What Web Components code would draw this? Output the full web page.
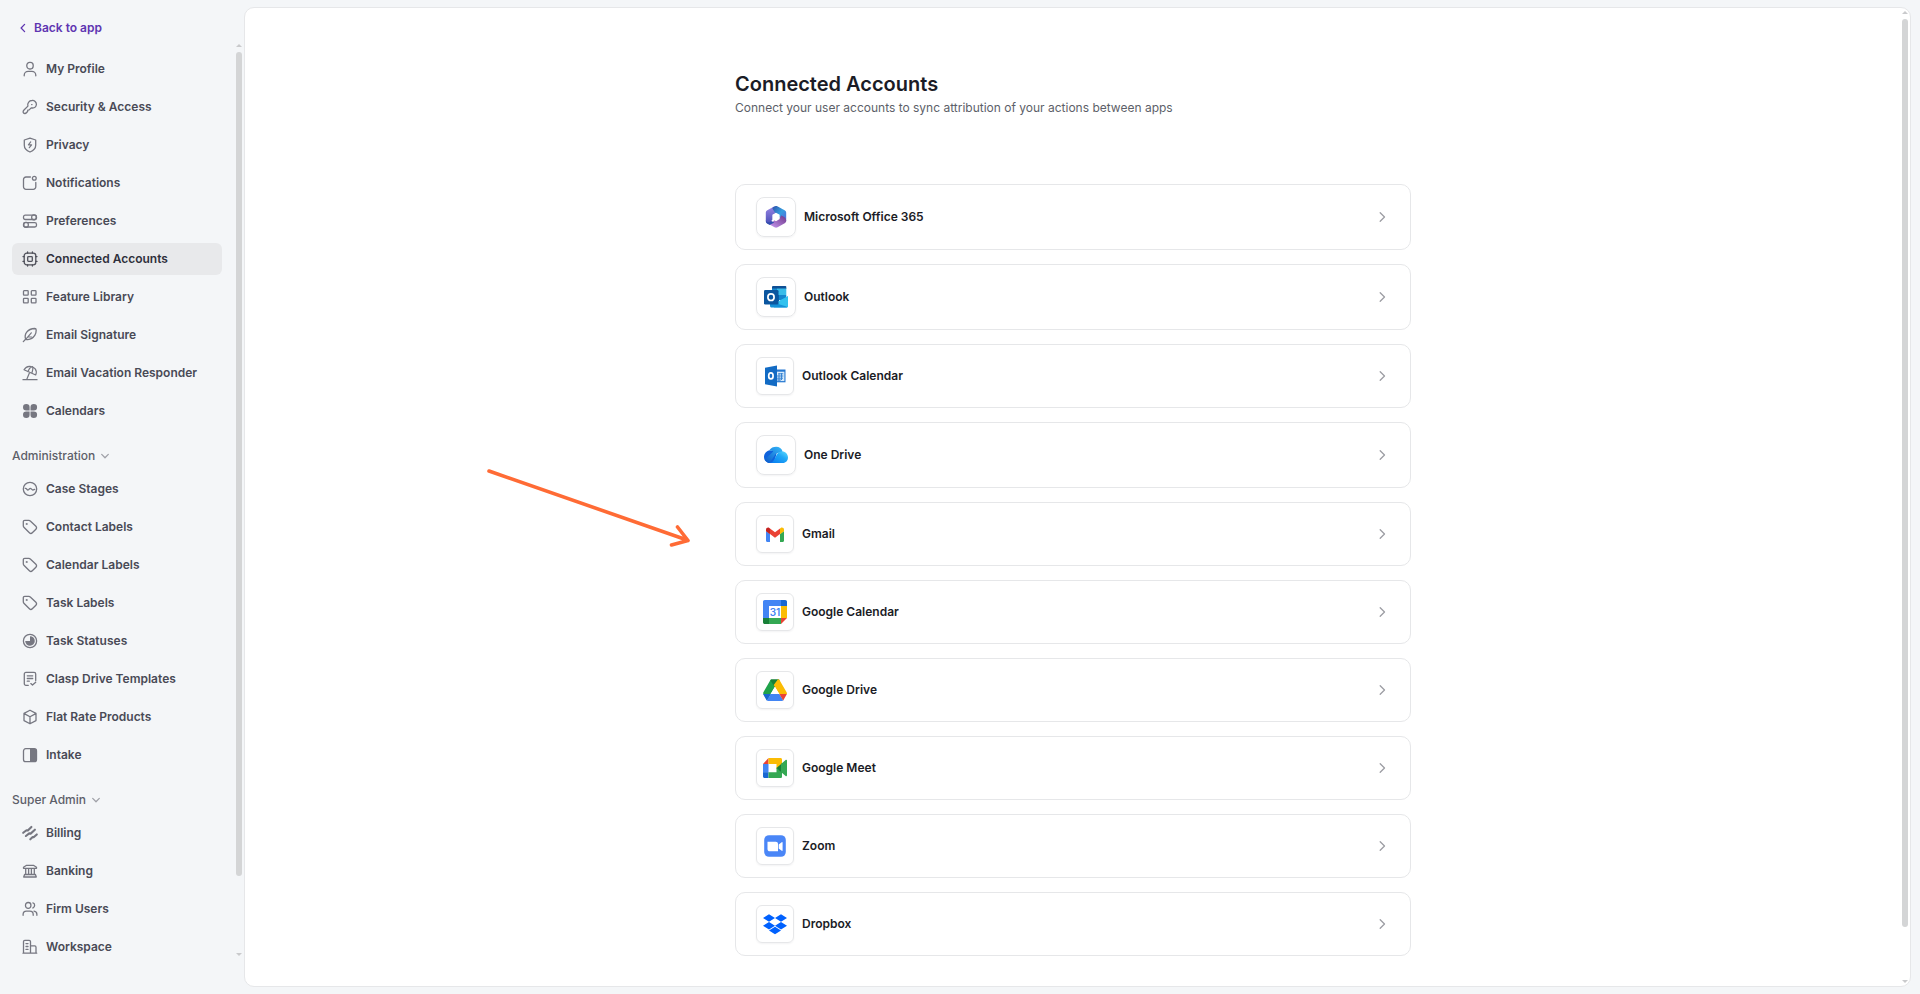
<!DOCTYPE html>
<html lang="en">
<head>
<meta charset="utf-8">
<meta name="viewport" content="width=device-width, initial-scale=1">
<title>Connected Accounts</title>
<style>
  :root {
    --bg: #f4f6f8;
    --line: #e6e7e9;
    --text: #1b1c26;
    --text-nav: #494a56;
    --text-muted: #5d5f69;
    --icon: #767781;
    --accent: #5e35b1;
  }
  body {
    margin: 0;
    background: var(--bg);
    color: var(--text);
    font-family: Inter, "Liberation Sans", sans-serif;
    font-size: 12px;
    line-height: 20px;
  }
</style>
</head>
<body>
<settings-app>
  <settings-sidebar slot="sidebar">
    <nav-item icon="user">My Profile</nav-item>
    <nav-item icon="key">Security &amp; Access</nav-item>
    <nav-item icon="shield">Privacy</nav-item>
    <nav-item icon="notification">Notifications</nav-item>
    <nav-item icon="sliders">Preferences</nav-item>
    <nav-item icon="chip" active>Connected Accounts</nav-item>
    <nav-item icon="grid">Feature Library</nav-item>
    <nav-item icon="feather">Email Signature</nav-item>
    <nav-item icon="umbrella">Email Vacation Responder</nav-item>
    <nav-item icon="clover">Calendars</nav-item>
    <nav-group label="Administration">
      <nav-item icon="stages">Case Stages</nav-item>
      <nav-item icon="tag">Contact Labels</nav-item>
      <nav-item icon="tag">Calendar Labels</nav-item>
      <nav-item icon="tag">Task Labels</nav-item>
      <nav-item icon="status">Task Statuses</nav-item>
      <nav-item icon="template">Clasp Drive Templates</nav-item>
      <nav-item icon="box">Flat Rate Products</nav-item>
      <nav-item icon="intake">Intake</nav-item>
    </nav-group>
    <nav-group label="Super Admin">
      <nav-item icon="billing">Billing</nav-item>
      <nav-item icon="bank">Banking</nav-item>
      <nav-item icon="users">Firm Users</nav-item>
      <nav-item icon="building">Workspace</nav-item>
    </nav-group>
  </settings-sidebar>

  <page-header>
    Connected Accounts
    <span slot="description">Connect your user accounts to sync attribution of your actions between apps</span>
  </page-header>
  <account-card logo="office" large>Microsoft Office 365</account-card>
  <account-card logo="outlook" large>Outlook</account-card>
  <account-card logo="outlookCalendar">Outlook Calendar</account-card>
  <account-card logo="onedrive" large>One Drive</account-card>
  <account-card logo="gmail">Gmail</account-card>
  <account-card logo="gcal">Google Calendar</account-card>
  <account-card logo="gdrive">Google Drive</account-card>
  <account-card logo="meet">Google Meet</account-card>
  <account-card logo="zoom">Zoom</account-card>
  <account-card logo="dropbox">Dropbox</account-card>
  <pointer-arrow slot="annotation"></pointer-arrow>
</settings-app>

<script>
// 16x16 line icons, drawn with currentColor
const ICONS = {
  user: '<rect x="4.8" y="1.4" width="6.4" height="6.6" rx="2.9"/><path d="M2.2 14.8v-.6a3.9 3.9 0 0 1 3.9-3.8h3.8a3.9 3.9 0 0 1 3.9 3.8v.6"/>',
  key: '<path d="M10 1.5a4.3 4.3 0 0 0-4.1 5.6L2 11c-1.2 1.2-1 2.5-.4 3 .6.7 2 .7 2.8-.2l1.2-1.3.2-1.4 1.4-.2 2-2a4.2 4.2 0 0 0 1.100.1A4 4 0 0 0 14.4 5.5 3.9 3.9 0 0 0 10 1.5z"/><path d="M9.6 5.6h.4"/>',
  shield: '<path d="M8 1.2 13.7 3v5.2c0 3.2-2.3 5.4-5.7 6.8-3.4-1.4-5.7-3.6-5.7-6.8V3z"/><path d="m8.7 4.9-2.3 2.900h3.2l-2.3 2.9" stroke-width="1.2"/>',
  notification: '<path d="M8.4 2H4a2.5 2.5 0 0 0-2.5 2.5v7.3A2.5 2.5 0 0 0 4 14.3h7.3a2.5 2.5 0 0 0 2.5-2.5V7.5"/><circle cx="12.3" cy="3.3" r="1.9"/>',
  sliders: '<rect x="1.5" y="2.2" width="13" height="4.3" rx="1.7"/><rect x="1.5" y="9.7" width="13" height="4.3" rx="1.7"/><rect x="9.7" y="1.9" width="4.5" height="4.9" rx="2"/><rect x="1.8" y="9.4" width="4.5" height="4.9" rx="2"/>',
  chip: '<rect x="2.2" y="2.2" width="11.6" height="11.6" rx="2.6"/><rect x="5.7" y="5.7" width="4.6" height="4.6" rx=".8"/><path d="M5.6 1v1.2M10.4 1v1.2M5.6 13.8V15M10.4 13.8V15M1 5.6h1.2M1 10.4h1.2M13.8 5.6H15M13.8 10.4H15"/>',
  grid: '<rect x="1.5" y="1.7" width="4.7" height="4.5" rx=".7"/><rect x="9.3" y="1.7" width="4.7" height="4.5" rx=".7"/><rect x="1.5" y="9.4" width="4.7" height="4.5" rx=".7"/><rect x="9.3" y="9.4" width="4.7" height="4.5" rx=".7"/>',
  feather: '<path d="m1.3 14.6 2.3-2.3"/><path d="M3.7 12.3C1.8 7.5 5.300 1.700 12.7 1.500c1 0 1.500.5 1.500 1.500 0 1.800-.2 3.500-1.300 5.200-1.900 3-5.200 5-9.200 4.100z"/><path d="m3.700 12.300 5.600-6.500M5.800 10h3.800" stroke-width="1.2"/>',
  umbrella: '<path d="M1 14.7h14"/><path d="M2 4.7C4.5.7 10 .2 13 3.700c1.600 2 1.600 4.300.7 6.300zM6 6.600c1-2.800 2.500-4.700 4.500-5M9.800 8.200c1-2.800 1.500-5 .7-6.600M7.700 7.200 4.700 14.500" stroke-width="1.2"/>',
  clover: '<path fill="currentColor" stroke="none" d="M7.600 7.600H4.300a3.300 3.300 0 1 1 3.300-3.300zM8.500 7.600V4.300a3.300 3.300 0 1 1 3.300 3.300zM7.600 8.500v3.300a3.300 3.300 0 1 1-3.300-3.300zM8.500 8.500h3.300a3.300 3.300 0 1 1-3.300 3.300z"/>',
  stages: '<circle cx="8" cy="8" r="6.7"/><path d="M3.2 7.300h.5c.9 0 1.200 1.700 2.300 1.700s1.200-1.700 2.300-1.700 1.400 1.700 2.500 1.700 1.200-.6 1.900-.6"/>',
  tag: '<path d="M1.3 2.800v4c0 .5.2 1 .6 1.400l5.500 5.500c1 1 2 1 2.900.1l3.600-3.600c.9-.9.900-2 0-2.900L8.300 2C7.900 1.500 7.400 1.300 6.900 1.300H2.800c-1 0-1.500.5-1.500 1.500z"/><circle cx="4.7" cy="5" r=".4"/>',
  status: '<circle cx="8" cy="8" r="6.600"/><path fill="currentColor" stroke="none" d="M8 3.200a4.800 4.800 0 1 1-4.800 4.900H8z"/>',
  template: '<path d="M6.300 14.300H3.900a1.600 1.600 0 0 1-1.600-1.600V3a1.600 1.600 0 0 1 1.600-1.600h8.200A1.600 1.600 0 0 1 13.700 3v6.500M5.300 4.800h5.400M5.300 7.500h5.400M5.300 10.200h2M8.800 12.600l1.700 1.500 3.200-2.800"/>',
  box: '<path d="m8 1.200 6 3.200v7.200l-6 3.200-6-3.200V4.400zM2.200 4.600 8 7.800l5.800-3.200M8 7.800v6.800"/>',
  intake: '<rect x="1.5" y="1.7" width="13" height="13" rx="2.2"/><path fill="currentColor" stroke="none" d="M8 1.7h4.500a2 2 0 0 1 2 2v9a2 2 0 0 1-2 2H8z"/>',
  billing: '<path stroke-width="2.1" d="M1.200 7.800 4.500 5.200l1.300.3 3.600-3.600M3.900 11 7.200 8.400l1.400.2L12.900 4.700M8.300 14.300l2.400-2.300 1.200.1 2.900-2.700"/>',
  bank: '<path d="M1.500 5.300V4.200L4.600 2.300h6.800l3.100 1.900v1.100zM3.700 5.600v5.900M6.600 5.600v5.900M9.400 5.600v5.900M12.300 5.600v5.900M2.600 11.500h10.800l.9 2.500H1.700z"/>',
  users: '<rect x="3.5" y="1.5" width="5.4" height="5.800" rx="2.6"/><path d="M1.100 14.300v-.9c0-1.900 1.400-3.300 3.300-3.300h3.500c1.900 0 3.300 1.400 3.300 3.300v.9M10.900 1.800c2.300.5 2.300 4.600 0 5.200M12 10.200c1.700.2 2.900 1.500 2.900 3.200v.9"/>',
  building: '<path d="M1.500 14.200V2.700a1.300 1.300 0 0 1 1.300-1.300h4.400a1.300 1.300 0 0 1 1.300 1.300v11.500M8.500 6.900h4.200A1.300 1.300 0 0 1 14 8.200v6M1 14.200h13.700M4 4.600h2M4 7.500h2M4 10.400h2"/>',
  left: '<path d="M9.600 4.400 6.100 8l3.500 3.600"/>',
  right: '<path d="m6.200 3.700 4.300 4.300-4.300 4.300"/>',
  down: '<path d="M4.700 6.400 8 9.700l3.300-3.300"/>'
};

// 24x24 product marks
const LOGOS = {
  office: `
    <defs>
      <linearGradient id="o1" x1="0" y1="0" x2="0" y2="1"><stop stop-color="#9a86e4"/><stop offset="1" stop-color="#4a50b8"/></linearGradient>
      <linearGradient id="o2" x1="0" y1="0" x2="1" y2="1"><stop stop-color="#2d50a8"/><stop offset=".5" stop-color="#369ee0"/><stop offset="1" stop-color="#5860d8"/></linearGradient>
      <linearGradient id="o3" x1="0" y1="1" x2="1" y2="0"><stop stop-color="#c99af0"/><stop offset="1" stop-color="#6c3489"/></linearGradient>
    </defs>
    <path fill="url(#o1)" d="M10.500 1.300 3.300 5.200C2.300 5.800 1.800 6.700 1.800 7.800v8.100c0 1.200.7 2 1.500 2.400 1.700.9 3.900.1 3.900-2l2-3L12.500 5z"/>
    <path fill="url(#o2)" d="M9 2.200 11 1.200c.8-.4 1.500-.4 2.300 0l7.300 4c1 .6 1.600 1.500 1.600 2.600v8c0 .5-.2 1-.6 1.300-1.500 0-4.600-.8-4.600-2.800L12 9 8.800 4.300C8.300 3.600 8.300 2.800 9 2.200z"/>
    <path fill="url(#o3)" d="M22.200 15.500c0 1.200-.5 2.200-1.500 2.800l-7.100 4c-1.100.6-2 .6-3.100 0l-5-2.800L12 14c1.700-.9 4.900-.8 5-3.600 2.400.6 5.200 2.600 5.200 5.100z"/>
    <path fill="#344eaf" d="M1.800 15.200c.3 2.300 4 3 5.400.8l3.100 1.600-4.600 2.500-2.300-1.400c-1-.6-1.600-1.700-1.600-3.500z"/>
    <path fill="#fff" stroke="#fff" stroke-width="1.500" stroke-linejoin="round" d="m12 8.600 2.900 1.600v3.500L12 15.400l-2.900-1.700v-3.500z"/>`,
  outlook: `
    <path fill="#0f4f94" d="M9 1h12.500c.5 0 .8.300.8.800V4H8V2a1 1 0 0 1 1-1z"/>
    <path fill="#168bd1" d="M8 3.500h5V10H8z"/><path fill="#39bce9" d="M13 3.500h9.300V10H13z"/>
    <path fill="#0b64ad" d="M8 10h7v6H8z"/><path fill="#1485cd" d="M15 10h7.300v5H15z"/>
    <path fill="#35b8ed" d="m24 11-15 8.500 1 3h12.500c.9 0 1.500-.6 1.500-1.500z"/>
    <path fill="#1591d8" d="M6 12v9c0 .9.700 1.500 1.500 1.500h15c.5 0 .9-.2 1.200-.5z"/>
    <path fill="#31c1ee" d="m11 18 13 4V11.500z"/>
    <rect y="5" width="14.500" height="14.500" rx="1.300" fill="#0b569f"/><ellipse cx="7" cy="12.200" rx="3.100" ry="3.300" fill="none" stroke="#fff" stroke-width="1.700"/>`,
  outlookCalendar: `
    <path fill="#2477d0" d="M13 5.500h9.500v12.800H13z"/><path fill="#d8ebfb" d="M13 7.700h8.400v9.400H13z"/>
    <path stroke="#3884d2" stroke-width="1" d="M15.500 9.800h4.800M14 12h6.300M14 14.200h6M14 16h4M16 9v8M18.500 9v7"/>
    <path fill="#126bc4" d="M2 3.800 14 1.500v21L2 20.200z"/><ellipse cx="7.900" cy="11.900" rx="2.200" ry="3" fill="none" stroke="#fff" stroke-width="1.700"/>`,
  onedrive: `
    <defs>
      <linearGradient id="d1" x1="0" y1="1" x2="1" y2="0"><stop stop-color="#0c58c9"/><stop offset="1" stop-color="#35bbfb"/></linearGradient>
      <linearGradient id="d2" x1="1" y1="0" x2="0" y2="1"><stop stop-color="#5fdcff"/><stop offset=".4" stop-color="#1fa7f6"/><stop offset="1" stop-color="#087aef"/></linearGradient>
    </defs>
    <path fill="#0f63dc" d="M6 7.200C2.500 7.700 0 10.500 0 13.900 0 17.300 2.800 20 6.300 20H10l3-11z"/>
    <path fill="url(#d1)" d="M5.300 7.300C7 4.800 9.300 3.800 12.200 3.800c3 0 5.600 1.800 6.500 5L12 10.500 5.500 20C3.200 19.700 1.400 18 .8 16.500L9.500 8.200z"/>
    <path fill="url(#d2)" d="M6 20h12.800c3 0 5.200-2.500 5.200-5.500 0-3.200-2.500-5.900-5.600-5.900-4.700 0-5.700 3.300-7.500 6.700C9.800 17.500 8.800 19.200 6 20z"/>`,
  gmail: `
    <path fill="#4285f4" d="M4.200 20H7V12L3 9v9.800c0 .7.500 1.200 1.200 1.200z"/><path fill="#34a853" d="M17 20h2.800c.7 0 1.200-.5 1.200-1.200V9l-4 3z"/>
    <path fill="#ea4335" d="M7 12V6.500l5 3.800 5-3.800V12l-5 3.800z"/><path fill="#c5221f" d="M3 7.700V9.300L7 12.200V6.600L6.300 6C4.900 5 3 6 3 7.700z"/><path fill="#fbbc04" d="M17 6.600v5.600l4-2.900V7.700C21 6 19.100 5 17.700 6z"/>`,
  gcal: `
    <path fill="#4285f4" d="M1.800 0h16.400v6H6v12H0V1.800C0 .8.800 0 1.800 0z"/><path fill="#1967d2" d="M18 0h4.200c1 0 1.800.8 1.800 1.800V6h-6z"/>
    <path fill="#fbbc04" d="M18 6h6v12h-6z"/><path fill="#34a853" d="M6 18h12v6H6z"/><path fill="#188038" d="M0 18h6v6H1.800C.8 24 0 23.200 0 22.200z"/><path fill="#ea4335" d="M18 18h6l-6 6z"/>
    <path fill="#fff" d="M6 6h12v12H6z"/><text x="12" y="16" text-anchor="middle" font-family="Inter, sans-serif" font-size="10" font-weight="600" fill="#4285f4">31</text>`,
  gdrive: `
    <path fill="#20a34a" d="m8.300 1.300 4 6.800L4 22.200l-3.600-6.300a1.700 1.700 0 0 1 0-1.700L7.300 2.200z"/><path fill="#188038" d="M7.300 2.200c.4-.6.900-.9 1.600-.9h6.200c.7 0 1.200.3 1.600.9L12 9.500z"/>
    <path fill="#fbbc04" d="M15 1.300c.7 0 1.300.3 1.600.9l7 12c.3.500.4 1 .4 1.800h-7.800L10.700 7.100z"/><path fill="#4285f4" d="M7.700 16h8.600l4 6.200c-.3.500-.8.800-1.500.8H5.200c-.7 0-1.200-.3-1.500-.8z"/>
    <path fill="#1967d2" d="M.1 16h7.600l-4 6.500z"/><path fill="#ea4335" d="M16.300 16h7.600l-3.700 6.500z"/><path fill="#fff" d="m12 8.700 4.300 7.300H7.700z"/>`,
  meet: `
    <path fill="#ea4335" d="M5.500 2v6H0z"/><path fill="#fbbc04" d="M5.500 2h12c.9 0 1.500.7 1.500 1.600V10l-5.500 3V8h-8z"/>
    <path fill="#4285f4" d="M0 8h5.500v8.500H0z"/><path fill="#1967d2" d="M0 16.300h5.500V22h-4C.7 22 0 21.300 0 20.500z"/>
    <path fill="#34a853" d="M5.500 16.300h8V11.500l5.500 4v4.900c0 .9-.6 1.600-1.500 1.600h-12z"/><path fill="#188038" d="m13.500 12 5.500-4.800v9.600z"/><path fill="#34a853" d="m18 8 4.600-4c.7-.5 1.400-.2 1.400.6v14.700c0 .8-.8 1.200-1.400.6L18 16z"/>`,
  zoom: `
    <rect x="1.200" y="1.200" width="21.600" height="21.600" rx="4.800" fill="#4a86f7"/>
    <path fill="#fff" d="M4.500 7.700h8.200c1.400 0 2.300.9 2.300 2.300v7.200H6.900c-1.500 0-2.400-.9-2.400-2.300zM15.700 10.500l3-2.300c.5-.3.900-.2.900.5v7.600c0 .7-.4.800-.9.500l-3-2.300z"/>`,
  dropbox: `
    <path fill="#0061fe" d="m6 2.200 6 3.800-6 3.800L0 6zM18 2.200 24 6l-6 3.800L12 6zM6 9.900l6 3.800-6 3.800-6-3.800zM18 9.900l6 3.800-6 3.800-6-3.800zM12 14.700l6 3.800-6 3.800-6-3.800z"/>`
};

class UiIcon extends HTMLElement {
  connectedCallback() {
    this.attachShadow({ mode: 'open' });
    this.shadowRoot.innerHTML = `
      <style>
        :host { display: block; flex: none; width: 16px; height: 16px; }
        svg { display: block; width: 100%; height: 100%; overflow: visible; }
      </style>
      <svg viewBox="0 0 16 16" fill="none" stroke="currentColor" stroke-width="1.3"
        stroke-linecap="round" stroke-linejoin="round" aria-hidden="true">${ICONS[this.getAttribute('name')]}</svg>
    `;
  }
}

class ScrollRail extends HTMLElement {
  connectedCallback() {
    this.attachShadow({ mode: 'open' });
    this.shadowRoot.innerHTML = `
      <style>
        :host { display: flex; flex-direction: column; flex: none; width: 8px; }
        svg { display: block; flex: none; width: 8px; height: 11px; fill: #c9cacc; }
        .track { flex: 1; }
        .thumb { width: 6px; height: ${this.getAttribute('size')}; margin: 0 1px; border-radius: 3px; background: #d4d5d6; }
      </style>
      <svg viewBox="0 0 8 11"><path d="m4 3 3 3H1z"/></svg>
      <div class="track"><div class="thumb"></div></div>
      <svg viewBox="0 0 8 11"><path d="m4 8 3-3H1z"/></svg>
    `;
  }
}

class NavItem extends HTMLElement {
  connectedCallback() {
    this.attachShadow({ mode: 'open' });
    this.shadowRoot.innerHTML = `
      <style>
        :host { display: block; }
        a {
          display: flex;
          align-items: center;
          gap: 8px;
          height: 32px;
          padding: 0 10px;
          border-radius: 6px;
          color: var(--text-nav);
          font-weight: 600;
          text-decoration: none;
          white-space: nowrap;
        }
        ui-icon { color: var(--icon); }
        a:hover { background: #eceef0; }
        :host([active]) a { background: #e8e9eb; color: #2f303b; }
        :host([active]) ui-icon { color: #50515b; }
      </style>
      <a href="#"><ui-icon name="${this.getAttribute('icon')}"></ui-icon><slot></slot></a>
    `;
  }
}

class NavGroup extends HTMLElement {
  connectedCallback() {
    this.attachShadow({ mode: 'open' });
    this.shadowRoot.innerHTML = `
      <style>
        :host { display: block; padding-top: 13px; }
        button {
          display: flex;
          align-items: center;
          gap: 2px;
          margin: 0 0 7px;
          padding: 0;
          border: 0;
          background: none;
          color: var(--text-muted);
          font: inherit;
          font-weight: 500;
          cursor: pointer;
        }
        ui-icon { color: #a0a1a8; }
        .items { display: flex; flex-direction: column; gap: 6px; }
        .items[hidden] { display: none; }
      </style>
      <button type="button" aria-expanded="true">${this.getAttribute('label')}<ui-icon name="down"></ui-icon></button>
      <div class="items"><slot></slot></div>
    `;
    const button = this.shadowRoot.querySelector('button');
    const items = this.shadowRoot.querySelector('.items');
    button.addEventListener('click', () => {
      items.hidden = !items.hidden;
      button.setAttribute('aria-expanded', String(!items.hidden));
    });
  }
}

class SettingsSidebar extends HTMLElement {
  connectedCallback() {
    this.attachShadow({ mode: 'open' });
    this.shadowRoot.innerHTML = `
      <style>
        :host {
          display: flex;
          flex-direction: column;
          box-sizing: border-box;
          width: 244px;
          height: 100%;
          padding: 18px 1px 35px 12px;
        }
        .back {
          display: flex;
          align-items: center;
          align-self: flex-start;
          gap: 3px;
          margin: 0 0 3px 3px;
          color: var(--accent);
          font-weight: 600;
          text-decoration: none;
        }
        .body { display: flex; flex: 1; min-height: 0; gap: 13px; }
        nav {
          display: flex;
          flex: 1;
          flex-direction: column;
          gap: 6px;
          padding-top: 12px;
          overflow-y: auto;
          scrollbar-width: none;
        }
      </style>
      <a class="back" href="#"><ui-icon name="left"></ui-icon>Back to app</a>
      <div class="body">
        <nav><slot></slot></nav>
        <scroll-rail size="92%"></scroll-rail>
      </div>
    `;
  }
}

class PageHeader extends HTMLElement {
  connectedCallback() {
    this.attachShadow({ mode: 'open' });
    this.shadowRoot.innerHTML = `
      <style>
        :host { display: block; margin-bottom: 52px; }
        h1 { margin: 0; font-size: 20px; font-weight: 600; line-height: 28px; }
        p { margin: 0; color: var(--text-muted); }
      </style>
      <h1><slot></slot></h1>
      <p><slot name="description"></slot></p>
    `;
  }
}

class AccountCard extends HTMLElement {
  connectedCallback() {
    this.attachShadow({ mode: 'open' });
    this.shadowRoot.innerHTML = `
      <style>
        :host { display: block; }
        button {
          display: flex;
          align-items: center;
          gap: 8px;
          width: 100%;
          padding: 12px 20px;
          border: 1px solid var(--line);
          border-radius: 10px;
          background: #fff;
          color: var(--text);
          font: inherit;
          font-weight: 600;
          text-align: left;
          cursor: pointer;
        }
        button:hover { background: #fafbfc; }
        .tile {
          display: grid;
          place-items: center;
          box-sizing: border-box;
          width: 38px;
          height: 38px;
          border: 1px solid var(--line);
          border-radius: 6px;
          box-shadow: 0 1px 2px rgba(20, 20, 40, 0.05);
        }
        :host([large]) .tile { width: 40px; height: 40px; border-radius: 8px; }
        .tile svg { display: block; width: 24px; height: 24px; }
        .name { flex: 1; }
        ui-icon { color: #9c9da3; }
      </style>
      <button type="button">
        <span class="tile"><svg viewBox="0 0 24 24" aria-hidden="true">${LOGOS[this.getAttribute('logo')]}</svg></span>
        <span class="name"><slot></slot></span>
        <ui-icon name="right"></ui-icon>
      </button>
    `;
  }
}

// Callout arrow that lies over the page, left of the cards
class PointerArrow extends HTMLElement {
  connectedCallback() {
    this.attachShadow({ mode: 'open' });
    this.shadowRoot.innerHTML = `
      <style>
        :host { position: absolute; top: 461px; right: calc(100% + 40px); pointer-events: none; }
        svg { display: block; width: 210px; height: 84px; }
      </style>
      <svg viewBox="0 0 210 84" fill="none" stroke="#ff6b35" stroke-width="3.6" stroke-linejoin="round" aria-hidden="true">
        <path stroke-linecap="round" d="M4 2 202 71M192.500 58 203 71.500 186.500 76"/>
      </svg>
    `;
  }
}

class SettingsApp extends HTMLElement {
  connectedCallback() {
    this.attachShadow({ mode: 'open' });
    this.shadowRoot.innerHTML = `
      <style>
        :host { display: flex; height: 100vh; }
        aside { flex: none; }
        .panel {
          display: flex;
          flex: 1;
          min-width: 0;
          margin: 7px 9px 7px 0;
          padding-right: 1px;
          border: 1px solid var(--line);
          border-radius: 10px;
          background: #fff;
          overflow: hidden;
        }
        main { flex: 1; min-width: 0; overflow-y: auto; scrollbar-width: none; }
        .content {
          position: relative;
          display: flex;
          flex-direction: column;
          gap: 14px;
          max-width: 676px;
          margin: 0 auto;
          padding: 62px 0 48px;
        }
      </style>
      <aside><slot name="sidebar"></slot></aside>
      <div class="panel">
        <main><div class="content"><slot></slot><slot name="annotation"></slot></div></main>
        <scroll-rail size="95%"></scroll-rail>
      </div>
    `;
  }
}

customElements.define('ui-icon', UiIcon);
customElements.define('scroll-rail', ScrollRail);
customElements.define('nav-item', NavItem);
customElements.define('nav-group', NavGroup);
customElements.define('settings-sidebar', SettingsSidebar);
customElements.define('page-header', PageHeader);
customElements.define('account-card', AccountCard);
customElements.define('pointer-arrow', PointerArrow);
customElements.define('settings-app', SettingsApp);
</script>
</body>
</html>
